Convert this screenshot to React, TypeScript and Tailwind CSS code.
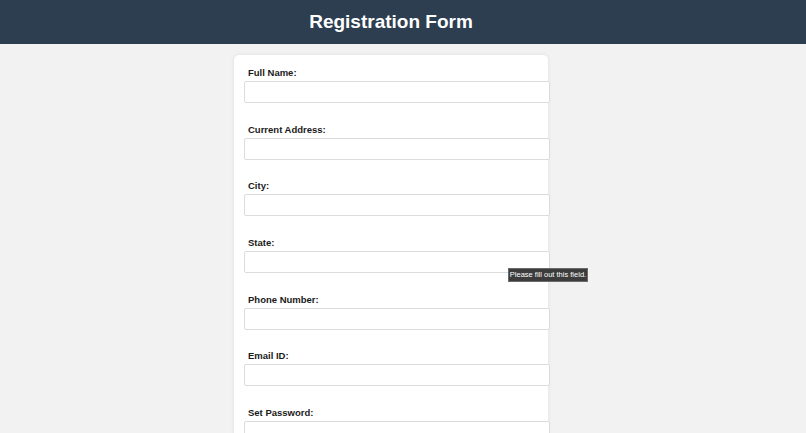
const fields = [
  'Full Name:',
  'Current Address:',
  'City:',
  'State:',
  'Phone Number:',
  'Email ID:',
  'Set Password:',
]

export default function App() {
  return (
    <div
      className="relative h-[433px] overflow-hidden bg-[#f2f2f2]"
      style={{ fontFamily: '"Liberation Sans", Arial, sans-serif' }}
    >
      <header className="flex h-[44px] items-center justify-center bg-[#2c3e50] pr-[24px]">
        <h1 className="text-[19px] font-bold text-white">Registration Form</h1>
      </header>

      <div className="ml-[234px] mt-[11px] w-[314px] rounded-[5px] bg-white px-[10px] pt-[10px] shadow-[0_0_4px_rgba(0,0,0,0.08)]">
        {fields.map((f) => (
          <div key={f} className="mb-[18.67px]">
            <label className="block h-[15px] pl-[4px] text-[9.5px] font-bold leading-[15px] text-[#1a1a1a]">
              {f}
            </label>
            <input
              type="text"
              className="mt-[1px] block h-[22px] w-[306px] rounded-[2px] border border-[#dcdcdc] bg-white outline-none"
            />
          </div>
        ))}
      </div>

      <div className="absolute left-[508px] top-[268px] flex h-[14px] w-[80px] items-center justify-center border border-[#6b6b6b] bg-[#3c3c3c] text-[7.5px] leading-none text-white">
        Please fill out this field.
      </div>
    </div>
  )
}
